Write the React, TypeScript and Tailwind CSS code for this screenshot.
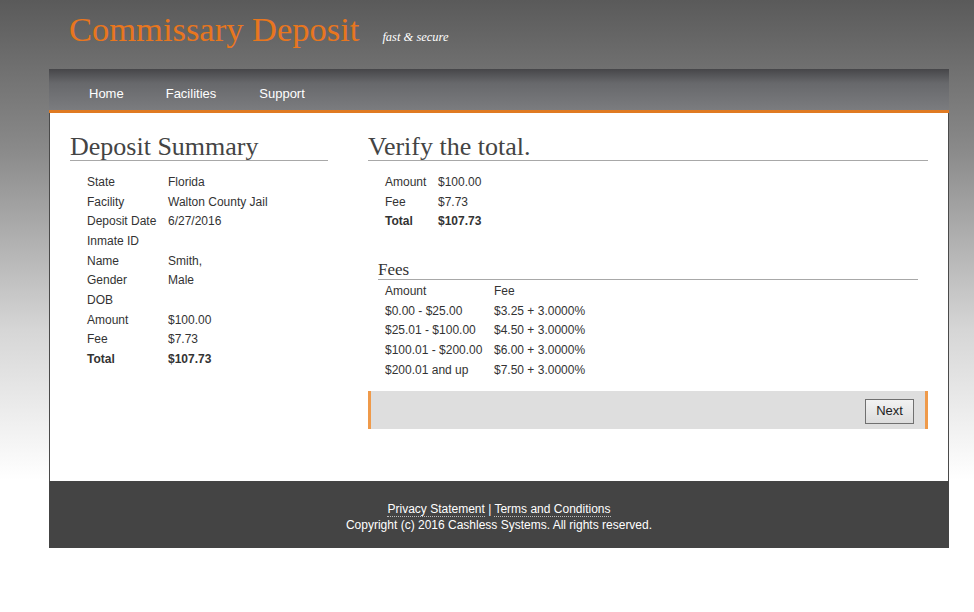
import React from "react";

const serif = { fontFamily: '"Liberation Serif", Georgia, serif' };

function Row({ label, value, bold, w }: { label: string; value: string; bold?: boolean; w: string }) {
  return (
    <div className={`flex h-[19.7px] items-center ${bold ? "font-bold" : ""}`}>
      <div className={w}>{label}</div>
      <div>{value}</div>
    </div>
  );
}

export default function App() {
  return (
    <div
      className="w-full min-h-[612px] bg-[linear-gradient(to_bottom,#5a5a5a_0px,#8a8a8a_150px,#d6d6d6_330px,#ffffff_480px,#ffffff_100%)] text-[12px] text-[#333]"
      style={{ fontFamily: '"Liberation Sans", Arial, sans-serif' }}
    >
      <div className="ml-[49px] w-[900px]">
        {/* Header */}
        <div className="h-[69px] pl-[20px] pt-[9px] flex items-baseline">
          <span className="text-[34.5px] text-[#e8761e] leading-[40px]" style={serif}>
            Commissary Deposit
          </span>
          <span className="ml-[23px] text-[12.5px] italic text-white" style={serif}>
            fast &amp; secure
          </span>
        </div>
        {/* Nav */}
        <div className="h-[44px] bg-[linear-gradient(to_bottom,#464649_0px,#67686b_14px,#7b7c7f_41px)] flex items-center pt-[9px] pl-[40px] text-[13px] text-white border-b-[3px] border-[#e07a22]">
          <span className="mr-[42px]">Home</span>
          <span className="mr-[43px]">Facilities</span>
          <span>Support</span>
        </div>
        {/* Content */}
        <div className="bg-white border-x border-[#4a4a4a] h-[368px] flex pl-[20px] pt-[20px]">
          <div className="w-[258px]">
            <h2 className="text-[26px] leading-[27px] text-[#444] border-b border-[#a8a8a8]" style={serif}>
              Deposit Summary
            </h2>
            <div className="pl-[17px] pt-[11px]">
              <Row w="w-[81px]" label="State" value="Florida" />
              <Row w="w-[81px]" label="Facility" value="Walton County Jail" />
              <Row w="w-[81px]" label="Deposit Date" value="6/27/2016" />
              <Row w="w-[81px]" label="Inmate ID" value="" />
              <Row w="w-[81px]" label="Name" value="Smith," />
              <Row w="w-[81px]" label="Gender" value="Male" />
              <Row w="w-[81px]" label="DOB" value="" />
              <Row w="w-[81px]" label="Amount" value="$100.00" />
              <Row w="w-[81px]" label="Fee" value="$7.73" />
              <Row w="w-[81px]" label="Total" value="$107.73" bold />
            </div>
          </div>
          <div className="ml-[40px] w-[560px]">
            <h2 className="text-[26px] leading-[27px] text-[#444] border-b border-[#a8a8a8]" style={serif}>
              Verify the total.
            </h2>
            <div className="pl-[17px] pt-[11px]">
              <Row w="w-[53px]" label="Amount" value="$100.00" />
              <Row w="w-[53px]" label="Fee" value="$7.73" />
              <Row w="w-[53px]" label="Total" value="$107.73" bold />
            </div>
            <div className="ml-[10px] mr-[10px] mt-[30px]">
              <div className="text-[17px] leading-[18px] text-[#333] border-b border-[#a8a8a8]" style={serif}>
                Fees
              </div>
              <div className="pl-[7px] pt-[1px]">
                {[
                  ["Amount", "Fee"],
                  ["$0.00 - $25.00", "$3.25 + 3.0000%"],
                  ["$25.01 - $100.00", "$4.50 + 3.0000%"],
                  ["$100.01 - $200.00", "$6.00 + 3.0000%"],
                  ["$200.01 and up", "$7.50 + 3.0000%"],
                ].map(([a, f]) => (
                  <Row key={a} w="w-[109px]" label={a} value={f} />
                ))}
              </div>
            </div>
            <div className="mt-[11px] h-[38px] bg-[#dedede] border-x-[3px] border-[#ef9a4a] flex items-center justify-end pr-[11px] pt-[3px]">
              <button className="h-[25px] w-[49px] border border-[#707070] bg-[linear-gradient(to_bottom,#f2f2f2,#dcdcdc)] text-[13px] text-[#222]">
                Next
              </button>
            </div>
          </div>
        </div>
        {/* Footer */}
        <div className="h-[67px] bg-[#444444] flex flex-col items-center pt-[20px] text-white text-[12px] leading-[16px]">
          <div>
            <span className="border-b border-dotted border-[#bbb]">Privacy Statement</span>
            {" | "}
            <span className="border-b border-dotted border-[#bbb]">Terms and Conditions</span>
          </div>
          <div>Copyright (c) 2016 Cashless Systems. All rights reserved.</div>
        </div>
      </div>
    </div>
  );
}
